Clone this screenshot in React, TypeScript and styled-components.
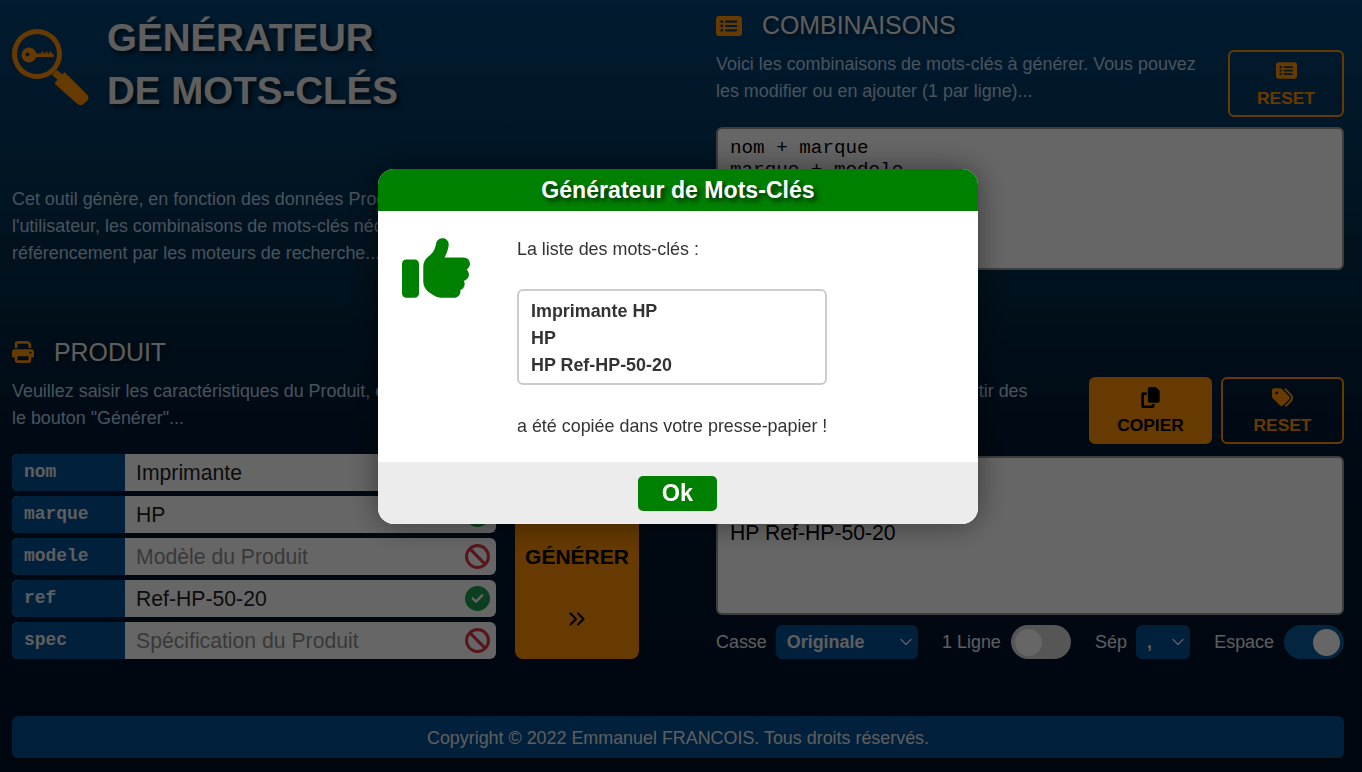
import React from "react";
import styled, { createGlobalStyle } from "styled-components";
import {
  FaThumbsUp, FaPrint, FaRectangleList, FaTags, FaCopy,
  FaCircleCheck, FaBan,
} from "react-icons/fa6";
import { ChevronDown, ChevronsRight } from "lucide-react";

const Global = createGlobalStyle`
  html, body { margin: 0; padding: 0; height: 100%; overflow: hidden; }
  body { font-family: "Liberation Sans", Arial, sans-serif; background: #000f25; }
  * { box-sizing: border-box; }
`;

const Page = styled.div`
  width: 1362px;
  height: 772px;
  padding: 12px 18px 14px 12px;
  display: flex;
  flex-direction: column;
  background: linear-gradient(180deg, #054478 0%, #04304f 30%, #001a33 55%, #000f25 100%);
  color: #ebebeb;
`;

const Columns = styled.div`
  display: grid;
  grid-template-columns: 628px 628px;
  grid-template-rows: 325px 322px;
  column-gap: 76px;
`;

const Section = styled.section`
  display: flex;
  flex-direction: column;
  min-width: 0;
`;

const Brand = styled.div`
  display: flex;
  align-items: flex-start;
  gap: 18px;
`;

const BrandIcon = styled.svg`
  width: 77px;
  height: 78px;
  margin-top: 16px;
  flex: none;
  fill: #ff9100;
`;

const Title = styled.h1`
  margin: -1px 0 0;
  font-size: 38.5px;
  line-height: 53px;
  font-weight: 700;
  color: #ebebeb;
  text-shadow: 3px 3px 5px rgba(0, 0, 0, 0.7);
`;

const Text = styled.p<{ $top?: number }>`
  margin: ${(p) => p.$top ?? 0}px 0 0;
  font-size: 17.92px;
  line-height: 27px;
  color: #b5cfe6;
`;

const Heading = styled.h2`
  margin: 0;
  height: 30px;
  display: flex;
  align-items: center;
  gap: 20px;
  font-size: 24.9px;
  font-weight: 400;
  color: #ebebeb;
  text-shadow: 2px 2px 5px rgba(0, 0, 0, 0.6);
  svg { color: #ff9100; font-size: 26px; flex: none; }
`;

const PrintHeading = styled(Heading)`
  svg { font-size: 22px; }
`;

const TopHeading = styled(Heading)`
  height: 27px;
`;

const ActionRow = styled.div<{ $top: number }>`
  display: flex;
  align-items: flex-start;
  justify-content: space-between;
  gap: 9px;
  margin-top: ${(p) => p.$top}px;
`;

const ActionText = styled(Text)`
  flex: 1;
  min-width: 0;
  margin: 1px 10px 0 0;
`;

const ActionButton = styled.button<{ $solid?: boolean; $w: number }>`
  width: ${(p) => p.$w}px;
  height: 67px;
  flex: none;
  padding: 8px 0 0;
  border: 2px solid #ff9100;
  border-radius: 6px;
  background: ${(p) => (p.$solid ? "#ff9100" : "transparent")};
  color: ${(p) => (p.$solid ? "#000" : "#ff9100")};
  font: 700 17.4px/22px "Liberation Sans", Arial, sans-serif;
  display: flex;
  flex-direction: column;
  align-items: center;
  gap: 6px;
  svg { font-size: 21px; }
`;

const Area = styled.textarea<{ $h: number; $mono?: boolean; $top: number }>`
  display: block;
  width: 100%;
  height: ${(p) => p.$h}px;
  margin-top: ${(p) => p.$top}px;
  padding: ${(p) => (p.$mono ? "8px 12px" : "7px 12px")};
  border: 2px solid #999;
  border-radius: 6px;
  background: #fff;
  color: #000;
  resize: none;
  outline: none;
  overflow: hidden;
  font-family: ${(p) => (p.$mono ? '"Liberation Mono", monospace' : '"Liberation Sans", Arial, sans-serif')};
  font-size: ${(p) => (p.$mono ? "19.25px" : "21.2px")};
  line-height: ${(p) => (p.$mono ? "22px" : "27px")};
`;

const FormGrid = styled.div`
  display: flex;
  gap: 19px;
  margin-top: 22px;
`;

const Fields = styled.div`
  width: 484px;
  display: flex;
  flex-direction: column;
  gap: 5px;
`;

const Field = styled.div`
  height: 37px;
  display: flex;
  align-items: stretch;
  border-radius: 6px;
  overflow: hidden;
  background: #fff;
`;

const FieldLabel = styled.label`
  width: 113px;
  flex: none;
  padding: 6px 0 0 12px;
  background: #005096;
  color: #ebebeb;
  font: 700 17.92px/24px "Liberation Mono", monospace;
`;

const FieldInput = styled.input`
  flex: 1;
  min-width: 0;
  border: 0;
  outline: none;
  background: transparent;
  padding: 1px 0 0 11px;
  color: #222;
  font: 400 21.2px/36px "Liberation Sans", Arial, sans-serif;
  &::placeholder { color: #8f8f8f; opacity: 1; }
`;

const FieldState = styled.span<{ $ok: boolean }>`
  width: 38px;
  flex: none;
  display: flex;
  align-items: center;
  padding-left: 7px;
  color: ${(p) => (p.$ok ? "#1f9f4f" : "#dc3545")};
  font-size: 25px;
`;

const Generate = styled.button`
  width: 124px;
  border: 0;
  border-radius: 8px;
  background: #ff9100;
  color: #000;
  display: flex;
  flex-direction: column;
  align-items: center;
  padding: 27px 0;
  justify-content: space-between;
  font: 700 21px/26px "Liberation Sans", Arial, sans-serif;
  svg { font-size: 26px; }
`;

const Controls = styled.div`
  display: flex;
  align-items: center;
  justify-content: space-between;
  height: 34px;
  margin-top: 10px;
`;

const Control = styled.label`
  display: flex;
  align-items: center;
  gap: 10px;
  font-size: 17.92px;
  color: #ebebeb;
`;

const SelectControl = styled(Control)`
  gap: 9px;
`;

const SelectWrap = styled.span<{ $w: number }>`
  position: relative;
  display: block;
  width: ${(p) => p.$w}px;
  height: 34px;
  svg {
    position: absolute;
    right: 2px;
    top: 7px;
    color: #dde;
    pointer-events: none;
  }
`;

const Select = styled.select`
  appearance: none;
  width: 100%;
  height: 100%;
  border: 0;
  border-radius: 6px;
  background: #005096;
  color: #ebebeb;
  padding: 0 0 0 11px;
  outline: none;
  font: 700 17.92px "Liberation Sans", Arial, sans-serif;
`;

const Switch = styled.span<{ $on?: boolean }>`
  width: 60px;
  height: 34px;
  border-radius: 17px;
  padding: 3.5px 4px;
  display: flex;
  justify-content: ${(p) => (p.$on ? "flex-end" : "flex-start")};
  background: ${(p) => (p.$on ? "#0b5c9e" : "#d8d8d8")};
`;

const Knob = styled.span`
  width: 27px;
  height: 27px;
  border-radius: 50%;
  background: #fff;
`;

const Footer = styled.footer`
  margin-top: auto;
  height: 42px;
  padding-top: 2px;
  border-radius: 6px;
  background: #005096;
  color: #ebebeb;
  display: flex;
  align-items: center;
  justify-content: center;
  font-size: 17.9px;
`;

const Overlay = styled.div`
  position: fixed;
  inset: 0;
  background: rgba(0, 0, 0, 0.6);
  display: flex;
  justify-content: center;
  align-items: flex-start;
  padding: 169px 6px 0 0;
`;

const Modal = styled.div`
  width: 600px;
  height: 355px;
  border-radius: 16px;
  overflow: hidden;
  background: #fff;
  box-shadow: 0 0 30px rgba(0, 0, 0, 0.45);
  display: flex;
  flex-direction: column;
`;

const ModalHead = styled.header`
  height: 42px;
  flex: none;
  background: #008000;
  color: #fff;
  text-align: center;
  font-size: 23.1px;
  line-height: 42px;
  font-weight: 700;
  text-shadow: 3px 3px 5px rgba(0, 0, 0, 0.7);
`;

const ModalBody = styled.div`
  flex: 1;
  display: flex;
  padding: 25px 24px 0;
  color: #333;
  font-size: 17.9px;
  line-height: 27px;
`;

const ThumbCol = styled.div`
  width: 115px;
  flex: none;
  margin-top: -2px;
  color: #008000;
  font-size: 68px;
  line-height: 0;
`;

const MsgCol = styled.div`
  display: flex;
  flex-direction: column;
  width: 320px;
`;

const Msg = styled.div<{ $top?: number }>`
  margin-top: ${(p) => p.$top ?? 0}px;
`;

const KeyBox = styled.div`
  width: 310px;
  height: 96px;
  margin-top: 26px;
  border: 2px solid #ccc;
  border-radius: 6px;
  padding: 7px 12px;
  font-weight: 700;
`;

const ModalFoot = styled.footer`
  height: 62px;
  flex: none;
  background: #ececec;
  display: flex;
  justify-content: center;
  padding: 14px 1px 0 0;
`;

const OkButton = styled.button`
  width: 79px;
  height: 35px;
  border: 0;
  border-radius: 5px;
  background: #008000;
  color: #fff;
  font: 700 23.5px/35px "Liberation Sans", Arial, sans-serif;
  padding: 0;
`;

const LensIcon = () => (
  <BrandIcon viewBox="12 28 77 78" aria-hidden="true">
    <path fillRule="evenodd" d="M37 29a25 25 0 1 0 0 50a25 25 0 1 0 0-50zM37 34a20 20 0 1 1 0 40a20 20 0 1 1 0-40z" />
    <path d="M52 75L57 70L63 75L58 80Z" />
    <path d="M65 72.5L87 94.5Q89.5 97.5 87.5 100.5L83 104.5Q80 106 77.5 104L55.5 84.5Q54.5 83 55.5 82L63.5 73Q64.3 72.2 65 72.5Z" />
    <path fillRule="evenodd" d="M29 47.5a7.5 7.5 0 1 0 0 15a7.5 7.5 0 1 0 0-15zM27.5 52.5a2 2 0 1 1 0 4a2 2 0 1 1 0-4z" />
    <path d="M35 53.5H41.5V51.7H43.5V53.5H45.5V51.7H47.5V53.5H49.5V51.7H51.5V53.5L54 54.5V56L53 57H35Z" />
  </BrandIcon>
);

const fields = [
  { name: "nom", value: "Imprimante", placeholder: "Nom du Produit" },
  { name: "marque", value: "HP", placeholder: "Marque du Produit" },
  { name: "modele", value: "", placeholder: "Modèle du Produit" },
  { name: "ref", value: "Ref-HP-50-20", placeholder: "Référence du Produit" },
  { name: "spec", value: "", placeholder: "Spécification du Produit" },
];

export default function App() {
  return (
    <>
      <Global />
      <Page>
        <Columns>
          <Section>
            <Brand>
              <LensIcon />
              <Title>
                GÉNÉRATEUR
                <br />
                DE MOTS-CLÉS
              </Title>
            </Brand>
            <Text $top={69}>
              Cet outil génère, en fonction des données Produit saisies par
              <br />
              l'utilisateur, les combinaisons de mots-clés nécessaires à son
              <br />
              référencement par les moteurs de recherche...
            </Text>
          </Section>
          <Section>
            <TopHeading>
              <FaRectangleList />
              COMBINAISONS
            </TopHeading>
            <ActionRow $top={11}>
              <ActionText>
                Voici les combinaisons de mots-clés à générer. Vous pouvez les modifier ou en ajouter (1 par ligne)...
              </ActionText>
              <ActionButton $w={116}>
                <FaRectangleList />
                RESET
              </ActionButton>
            </ActionRow>
            <Area
              $mono
              $h={143}
              $top={10}
              readOnly
              defaultValue={"nom + marque\nmarque + modele\nmarque + ref\nnom + spec"}
            />
          </Section>
          <Section>
            <PrintHeading>
              <FaPrint />
              PRODUIT
            </PrintHeading>
            <Text $top={11}>
              Veuillez saisir les caractéristiques du Produit, et appuyer sur
              <br />
              le bouton "Générer"...
            </Text>
            <FormGrid>
              <Fields>
                {fields.map((f) => (
                  <Field key={f.name}>
                    <FieldLabel>{f.name}</FieldLabel>
                    <FieldInput readOnly defaultValue={f.value} placeholder={f.placeholder} />
                    <FieldState $ok={!!f.value}>{f.value ? <FaCircleCheck /> : <FaBan />}</FieldState>
                  </Field>
                ))}
              </Fields>
              <Generate>
                <FaTags />
                GÉNÉRER
                <ChevronsRight size={26} strokeWidth={2} />
              </Generate>
            </FormGrid>
          </Section>
          <Section>
            <Heading>
              <FaTags />
              MOTS-CLÉS
            </Heading>
            <ActionRow $top={10}>
              <ActionText>
                Voici les mots-clés générés à partir des
                <br />
                combinaisons...
              </ActionText>
              <ActionButton $w={123} $solid>
                <FaCopy />
                COPIER
              </ActionButton>
              <ActionButton $w={123}>
                <FaTags />
                RESET
              </ActionButton>
            </ActionRow>
            <Area
              $h={159}
              $top={12}
              readOnly
              defaultValue={"Imprimante HP\nHP\nHP Ref-HP-50-20"}
            />
            <Controls>
              <SelectControl>
                Casse
                <SelectWrap $w={142}>
                  <Select defaultValue="Originale">
                    <option>Originale</option>
                    <option>Minuscules</option>
                    <option>Majuscules</option>
                  </Select>
                  <ChevronDown size={20} strokeWidth={1.8} />
                </SelectWrap>
              </SelectControl>
              <Control>
                1 Ligne
                <Switch>
                  <Knob />
                </Switch>
              </Control>
              <SelectControl>
                Sép
                <SelectWrap $w={54}>
                  <Select defaultValue=",">
                    <option>,</option>
                    <option>;</option>
                  </Select>
                  <ChevronDown size={20} strokeWidth={1.8} />
                </SelectWrap>
              </SelectControl>
              <Control>
                Espace
                <Switch $on>
                  <Knob />
                </Switch>
              </Control>
            </Controls>
          </Section>
        </Columns>
        <Footer>Copyright © 2022 Emmanuel FRANCOIS. Tous droits réservés.</Footer>
      </Page>
      <Overlay>
        <Modal>
          <ModalHead>Générateur de Mots-Clés</ModalHead>
          <ModalBody>
            <ThumbCol>
              <FaThumbsUp />
            </ThumbCol>
            <MsgCol>
              <Msg>La liste des mots-clés :</Msg>
              <KeyBox>
                Imprimante HP
                <br />
                HP
                <br />
                HP Ref-HP-50-20
              </KeyBox>
              <Msg $top={28}>a été copiée dans votre presse-papier !</Msg>
            </MsgCol>
          </ModalBody>
          <ModalFoot>
            <OkButton>Ok</OkButton>
          </ModalFoot>
        </Modal>
      </Overlay>
    </>
  );
}
